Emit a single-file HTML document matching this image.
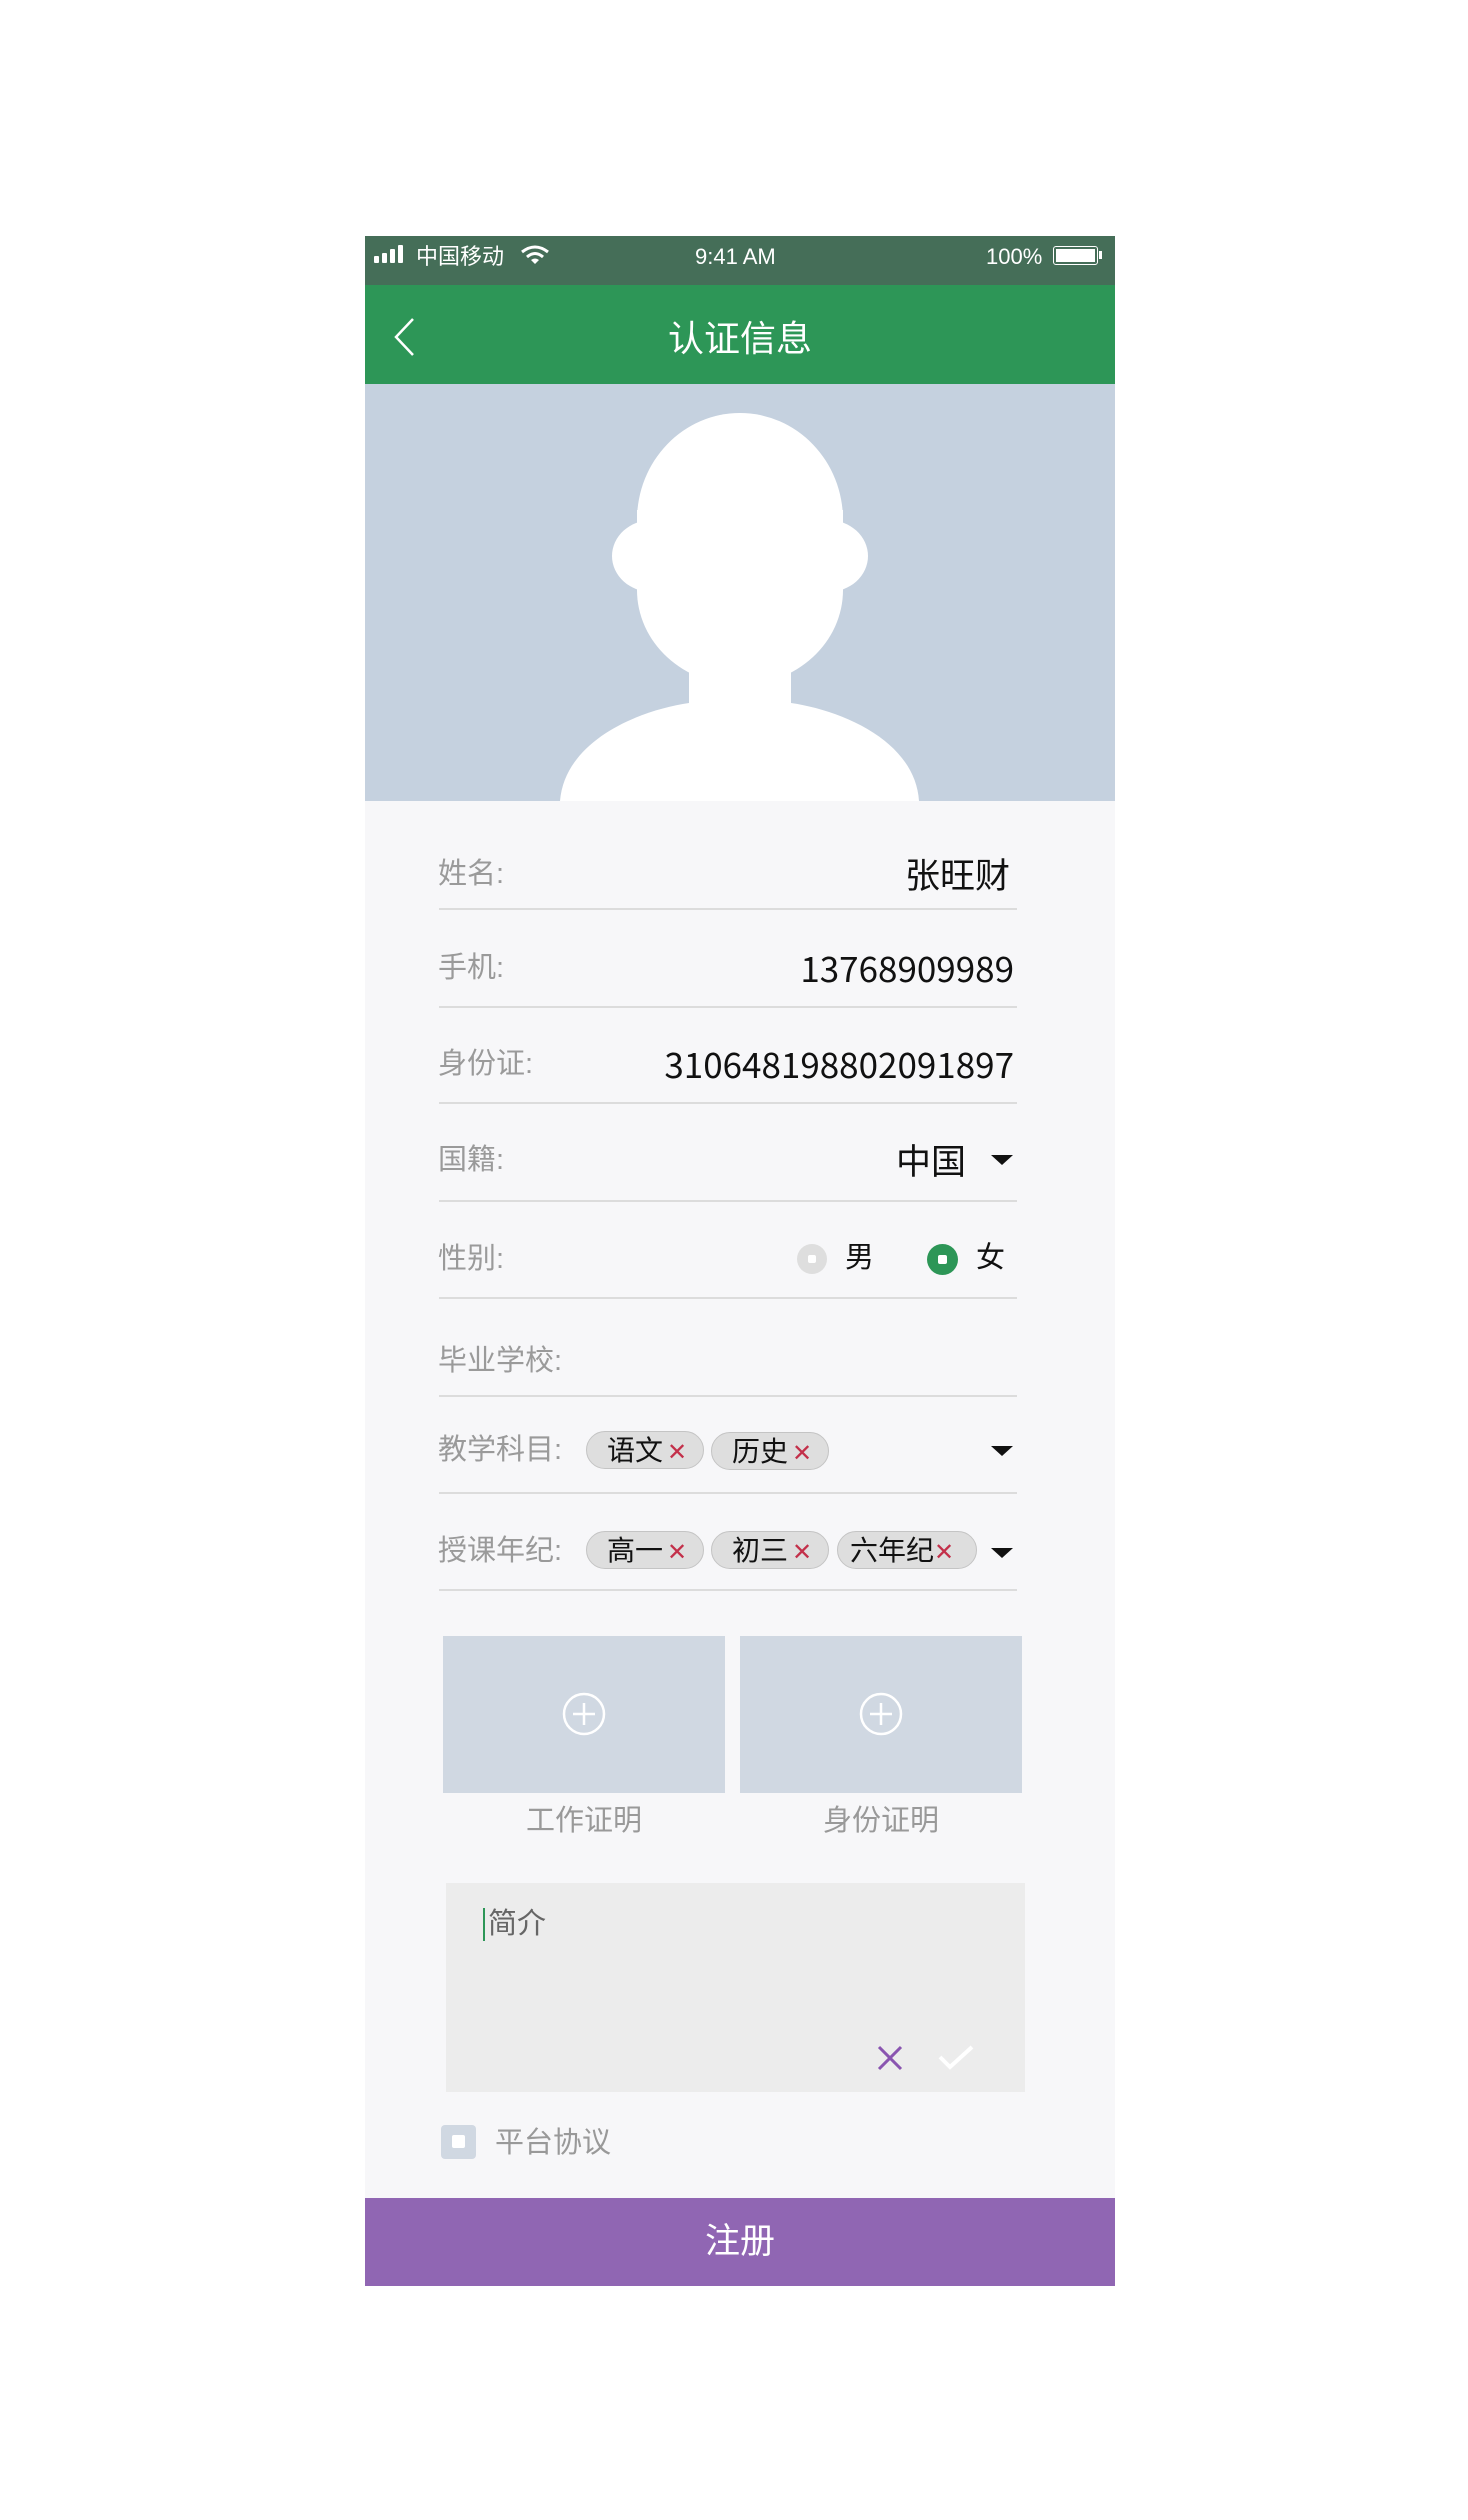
<!DOCTYPE html>
<html><head><meta charset="utf-8"><style>
*{margin:0;padding:0;box-sizing:border-box}
body{width:1468px;height:2520px;background:#fff;position:relative;overflow:hidden;font-family:"Liberation Sans","Noto Sans CJK SC",sans-serif}
.a{position:absolute}
.lbl{position:absolute;left:438px;font-size:29px;color:#9a9a9a;line-height:36px}
.val{position:absolute;right:454px;font-size:35px;color:#111;line-height:40px;font-family:"Noto Sans CJK SC",sans-serif}
.line{position:absolute;left:439px;width:578px;height:2px;background:#dcdcdc}
.tri{position:absolute;width:0;height:0;border-left:11px solid transparent;border-right:11px solid transparent;border-top:10px solid #111}
.chip{position:absolute;height:38px;border:1.5px solid #c4c4c4;background:#dedede;border-radius:19px;font-size:28px;line-height:34px;color:#111;padding-left:20px;font-family:"Noto Sans CJK SC",sans-serif}
.chip i{font-style:normal;color:#c3304a;font-size:24px;margin-left:4px}
</style></head><body>
<div class="a" style="left:365px;top:236px;width:750px;height:49px;background:#456e58"></div>
<div class="a" style="left:374px;top:256px;width:5px;height:7px;background:#fff;border-radius:1px"></div>
<div class="a" style="left:382px;top:253px;width:5px;height:10px;background:#fff;border-radius:1px"></div>
<div class="a" style="left:390px;top:249px;width:5px;height:14px;background:#fff;border-radius:1px"></div>
<div class="a" style="left:398px;top:245px;width:5px;height:18px;background:#fff;border-radius:1px"></div>
<div class="a" style="left:416px;top:240px;font-size:22px;color:#fff;line-height:34px">中国移动</div>
<svg class="a" style="left:520px;top:244px" width="30" height="22" viewBox="0 0 30 22"><path d="M2 8 Q15 -2 28 8" stroke="#fff" stroke-width="3" fill="none"/><path d="M7 13 Q15 6 23 13" stroke="#fff" stroke-width="3" fill="none"/><path d="M11 16 L15 20 L19 16 Q15 13 11 16Z" fill="#fff"/></svg>
<div class="a" style="left:695px;top:240px;font-size:22px;color:#fff;line-height:34px">9:41 AM</div>
<div class="a" style="left:986px;top:240px;font-size:22px;color:#fff;line-height:34px">100%</div>
<div class="a" style="left:1053px;top:246px;width:45px;height:19px;border:1.5px solid #fff;border-radius:3px;padding:2px"><div style="width:100%;height:100%;background:#fff"></div></div>
<div class="a" style="left:1099px;top:251px;width:3px;height:8px;background:#fff"></div>
<div class="a" style="left:365px;top:285px;width:750px;height:99px;background:#2d9657"></div>
<svg class="a" style="left:390px;top:316px" width="28" height="42"><path d="M23 3 L6 21 L23 39" stroke="#fff" stroke-width="2.5" fill="none"/></svg>
<div class="a" style="left:365px;top:314px;width:750px;text-align:center;font-size:36px;color:#fff;line-height:50px">认证信息</div>
<div class="a" style="left:365px;top:384px;width:750px;height:417px;background:#c5d1df;overflow:hidden">
<svg width="750" height="417" viewBox="365 384 750 417"><g fill="#fff">
<ellipse cx="740" cy="520" rx="103" ry="107"/>
<rect x="637" y="510" width="206" height="80"/>
<ellipse cx="740" cy="590" rx="103" ry="95"/>
<ellipse cx="652" cy="556" rx="40" ry="36"/>
<ellipse cx="828" cy="556" rx="40" ry="36"/>
<rect x="689" y="660" width="102" height="50"/>
<path d="M560 801 C565 740 640 710 689 703 L791 703 C840 710 915 740 919 801Z"/>
</g></svg></div>
<div class="a" style="left:365px;top:801px;width:750px;height:1397px;background:#f7f7f9"></div>
<div class="lbl" style="top:856px">姓名:</div><div class="val" style="top:854px;right:458px">张旺财</div><div class="line" style="top:908px"></div>
<div class="lbl" style="top:950px">手机:</div><div class="val" style="top:948px">13768909989</div><div class="line" style="top:1006px"></div>
<div class="lbl" style="top:1046px">身份证:</div><div class="val" style="top:1044px">310648198802091897</div><div class="line" style="top:1102px"></div>
<div class="lbl" style="top:1142px">国籍:</div><div class="val" style="top:1140px;right:502px">中国</div><div class="tri" style="left:991px;top:1155px"></div><div class="line" style="top:1200px"></div>
<div class="lbl" style="top:1241px">性别:</div>
<div class="a" style="left:797px;top:1244px;width:30px;height:30px;border-radius:50%;background:#dedede"></div><div class="a" style="left:808px;top:1255px;width:8px;height:8px;background:#fff;border-radius:2px"></div>
<div class="a" style="left:845px;top:1240px;font-size:29px;color:#111;line-height:36px">男</div>
<div class="a" style="left:927px;top:1244px;width:31px;height:31px;border-radius:50%;background:#2d9657"></div><div class="a" style="left:938px;top:1255px;width:9px;height:9px;background:#fff;border-radius:2px"></div>
<div class="a" style="left:976px;top:1240px;font-size:29px;color:#111;line-height:36px">女</div>
<div class="line" style="top:1297px"></div>
<div class="lbl" style="top:1343px">毕业学校:</div><div class="line" style="top:1395px"></div>
<div class="lbl" style="top:1432px">教学科目:</div>
<div class="chip" style="left:586px;top:1431px;width:118px">语文<i>✕</i></div>
<div class="chip" style="left:711px;top:1432px;width:118px">历史<i>✕</i></div>
<div class="tri" style="left:991px;top:1446px"></div><div class="line" style="top:1492px"></div>
<div class="lbl" style="top:1533px">授课年纪:</div>
<div class="chip" style="left:586px;top:1531px;width:118px">高一<i>✕</i></div>
<div class="chip" style="left:711px;top:1531px;width:118px">初三<i>✕</i></div>
<div class="chip" style="left:837px;top:1531px;width:140px;padding-left:12px">六年纪<i style="margin-left:0">✕</i></div>
<div class="tri" style="left:991px;top:1548px"></div><div class="line" style="top:1589px"></div>
<div class="a" style="left:443px;top:1636px;width:282px;height:157px;background:#d0d8e2"></div>
<div class="a" style="left:740px;top:1636px;width:282px;height:157px;background:#d0d8e2"></div>
<svg class="a" style="left:562px;top:1692px" width="44" height="44"><circle cx="22" cy="22" r="20" stroke="#fff" stroke-width="2.5" fill="none"/><path d="M22 11V33M11 22H33" stroke="#fff" stroke-width="2.5"/></svg>
<svg class="a" style="left:859px;top:1692px" width="44" height="44"><circle cx="22" cy="22" r="20" stroke="#fff" stroke-width="2.5" fill="none"/><path d="M22 11V33M11 22H33" stroke="#fff" stroke-width="2.5"/></svg>
<div class="a" style="left:443px;top:1803px;width:282px;text-align:center;font-size:29px;color:#999;line-height:36px">工作证明</div>
<div class="a" style="left:740px;top:1803px;width:282px;text-align:center;font-size:29px;color:#999;line-height:36px">身份证明</div>
<div class="a" style="left:446px;top:1883px;width:579px;height:209px;background:#ececec"></div>
<div class="a" style="left:483px;top:1908px;width:2px;height:33px;background:#2d9657"></div>
<div class="a" style="left:488px;top:1906px;font-size:29px;color:#666;line-height:36px">简介</div>
<svg class="a" style="left:877px;top:2045px" width="26" height="26"><path d="M2 2L24 24M24 2L2 24" stroke="#8a55b0" stroke-width="3"/></svg>
<svg class="a" style="left:938px;top:2045px" width="36" height="26"><path d="M2 12L12 22L34 2" stroke="#fff" stroke-width="4" fill="none"/></svg>
<div class="a" style="left:441px;top:2125px;width:35px;height:34px;background:#d0d8e2;border-radius:4px"></div>
<div class="a" style="left:452px;top:2135px;width:13px;height:13px;background:#fff;border-radius:2px"></div>
<div class="a" style="left:495px;top:2125px;font-size:29px;color:#999;line-height:36px">平台协议</div>
<div class="a" style="left:365px;top:2198px;width:750px;height:88px;background:#9066b3;text-align:center;color:#fff;font-size:35px;line-height:88px">注册</div>
</body></html>
